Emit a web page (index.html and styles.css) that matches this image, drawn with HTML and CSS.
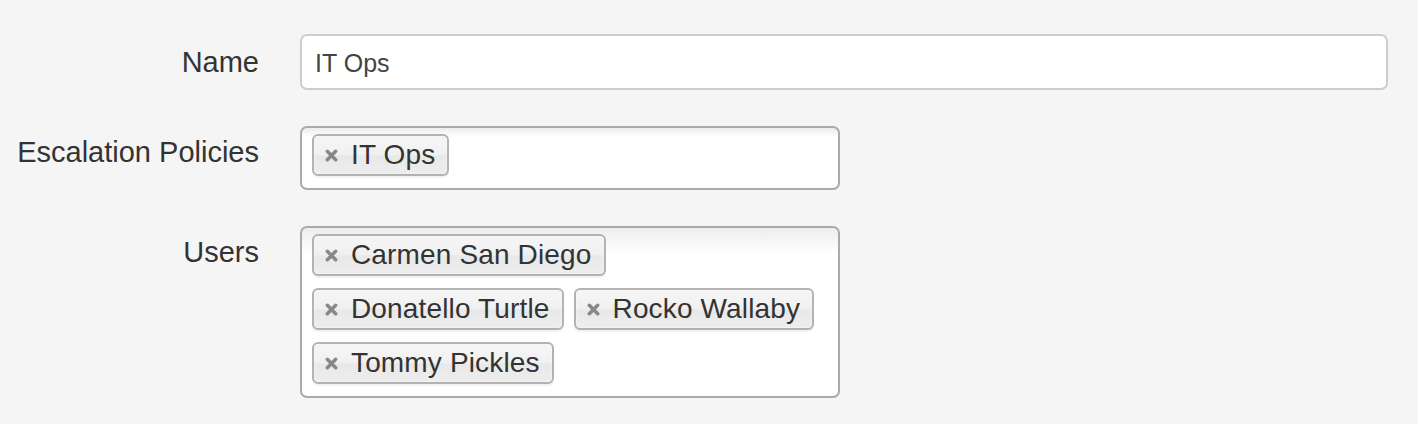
FILE: index.html
```html
<!DOCTYPE html>
<html>
<head>
<meta charset="utf-8">
<title>Team</title>
<link rel="stylesheet" href="styles.css">
</head>
<body>
<form class="form">
  <div class="row">
    <label class="label" for="name">Name</label>
    <input class="text-input" id="name" type="text" value="IT Ops">
  </div>
  <div class="row">
    <label class="label">Escalation Policies</label>
    <ul class="choices">
      <li class="tag"><svg class="close" viewBox="0 0 14 14" width="13" height="13"><path d="M2.5 2.5L11.5 11.5M11.5 2.5L2.5 11.5"/></svg><span>IT Ops</span></li>
    </ul>
  </div>
  <div class="row">
    <label class="label">Users</label>
    <ul class="choices">
      <li class="tag"><svg class="close" viewBox="0 0 14 14" width="13" height="13"><path d="M2.5 2.5L11.5 11.5M11.5 2.5L2.5 11.5"/></svg><span>Carmen San Diego</span></li>
      <li class="tag"><svg class="close" viewBox="0 0 14 14" width="13" height="13"><path d="M2.5 2.5L11.5 11.5M11.5 2.5L2.5 11.5"/></svg><span>Donatello Turtle</span></li>
      <li class="tag"><svg class="close" viewBox="0 0 14 14" width="13" height="13"><path d="M2.5 2.5L11.5 11.5M11.5 2.5L2.5 11.5"/></svg><span>Rocko Wallaby</span></li>
      <li class="tag"><svg class="close" viewBox="0 0 14 14" width="13" height="13"><path d="M2.5 2.5L11.5 11.5M11.5 2.5L2.5 11.5"/></svg><span>Tommy Pickles</span></li>
    </ul>
  </div>
</form>
</body>
</html>
```
FILE: styles.css
```css
html, body {
  margin: 0;
  padding: 0;
  background: #f5f5f5;
}

body {
  font-family: "Liberation Sans", Arial, sans-serif;
  color: #333;
}

.form {
  display: flex;
  flex-direction: column;
  gap: 36px;
  padding: 34px 30px 0 0;
}

.row {
  display: flex;
  align-items: baseline;
  gap: 41px;
}

.label {
  flex: 0 0 259px;
  text-align: right;
  font-size: 29px;
  color: #333;
}

.text-input {
  flex: 1 1 auto;
  box-sizing: border-box;
  height: 56px;
  margin: 0;
  padding: 3px 13px 1px;
  border: 2px solid #cdcdcd;
  border-radius: 7px;
  background: #fff;
  font-family: "Liberation Sans", Arial, sans-serif;
  font-size: 25px;
  line-height: 48px;
  color: #444;
  outline: none;
}

.choices {
  box-sizing: border-box;
  width: 540px;
  margin: 0;
  padding: 6px 10px 0 10px;
  list-style: none;
  display: flex;
  flex-wrap: wrap;
  column-gap: 10px;
  border: 2px solid #aaa;
  border-radius: 7px;
  background-color: #fff;
  background-image: linear-gradient(#eee 1%, #fff 15%);
}

.tag {
  box-sizing: border-box;
  height: 42px;
  margin: 0 0 12px;
  padding: 0 12px 0 11px;
  display: flex;
  align-items: center;
  gap: 13px;
  border: 2px solid #b3b3b3;
  border-radius: 6px;
  background-color: #eee;
  background-image: linear-gradient(#f4f4f4 20%, #f0f0f0 50%, #e8e8e8 52%, #eee 100%);
  box-shadow: inset 0 0 2px #fff, 0 2px 0 rgba(0, 0, 0, 0.05);
  font-size: 28px;
  letter-spacing: 0.15px;
  line-height: 38px;
  color: #333;
}

.close {
  flex: 0 0 auto;
  fill: none;
  stroke: #888;
  stroke-width: 3.8;
  stroke-linecap: round;
}
```
